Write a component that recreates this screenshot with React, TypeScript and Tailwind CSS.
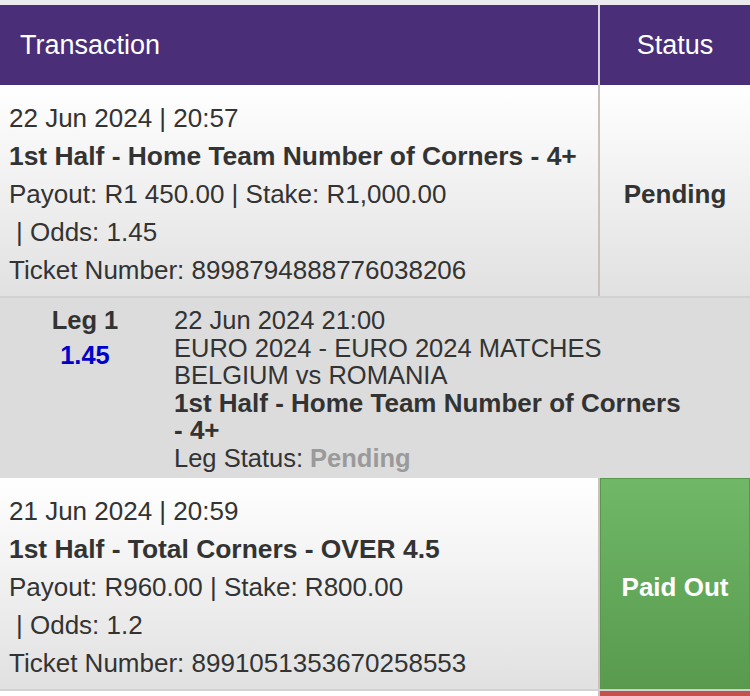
import React from "react";

type Bet = {
  date: string;
  title: string;
  payout: string;
  stake: string;
  odds: string;
  ticket: string;
  status: "pending" | "paid";
};

const bets: Bet[] = [
  {
    date: "22 Jun 2024 | 20:57",
    title: "1st Half - Home Team Number of Corners - 4+",
    payout: "R1 450.00",
    stake: "R1,000.00",
    odds: "1.45",
    ticket: "8998794888776038206",
    status: "pending",
  },
  {
    date: "21 Jun 2024 | 20:59",
    title: "1st Half - Total Corners - OVER 4.5",
    payout: "R960.00",
    stake: "R800.00",
    odds: "1.2",
    ticket: "8991051353670258553",
    status: "paid",
  },
];

function BetRow({ bet }: { bet: Bet }) {
  return (
    <div className="grid grid-cols-[598px_2px_150px] border-b-2 border-[#d2d2d2]">
      <div className="h-[211px] bg-linear-to-b from-white to-[#e1e1e1] pl-[9px] pt-[14px] text-[26px] leading-[38px] text-[#333]">
        <div>{bet.date}</div>
        <div className="text-[26.4px] font-bold">{bet.title}</div>
        <div>
          Payout: {bet.payout} | Stake: {bet.stake}
        </div>
        <div className="pl-[7px]">| Odds: {bet.odds}</div>
        <div>Ticket Number: {bet.ticket}</div>
      </div>
      <div className="bg-[#cbbfbf]" />
      {bet.status === "pending" ? (
        <div className="flex items-center justify-center bg-linear-to-b from-white to-[#e1e1e1] pt-2 text-[26px] font-bold text-[#333]">
          Pending
        </div>
      ) : (
        <div className="flex items-center justify-center border border-[#58984d] bg-linear-to-b from-[#70b868] to-[#599a4e] pt-2 text-[26px] font-bold text-white">
          Paid Out
        </div>
      )}
    </div>
  );
}

function LegRow() {
  return (
    <div className="grid h-[180px] grid-cols-[170px_530px] gap-x-[4px] bg-[#dcdcdc] pt-[9px] text-[25.5px] leading-[27.5px] text-[#333]">
      <div className="text-center">
        <div className="font-bold">Leg 1</div>
        <div className="mt-[7px] font-bold text-[#0000cc]">1.45</div>
      </div>
      <div>
        <div>22 Jun 2024 21:00</div>
        <div>EURO 2024 - EURO 2024 MATCHES</div>
        <div>BELGIUM vs ROMANIA</div>
        <div className="text-[26px] font-bold">
          1st Half - Home Team Number of Corners <span className="whitespace-nowrap">- 4+</span>
        </div>
        <div>
          Leg Status: <span className="font-bold text-[#9a9a9a]">Pending</span>
        </div>
      </div>
    </div>
  );
}

export default function App() {
  return (
    <div className="h-[696px] w-[750px] overflow-hidden bg-white font-['Liberation_Sans',Arial,sans-serif]">
      <div className="h-[5px] bg-[#ebebef]" />
      <div className="grid h-[80px] grid-cols-[598px_2px_150px] bg-[#4a2e77] text-[27px] text-white">
        <div className="flex items-center pl-5">Transaction</div>
        <div className="bg-[#d7d0de]" />
        <div className="flex items-center justify-center">Status</div>
      </div>
      <BetRow bet={bets[0]} />
      <LegRow />
      <BetRow bet={bets[1]} />
      <div className="grid h-[10px] grid-cols-[598px_2px_150px]">
        <div className="bg-white" />
        <div className="bg-[#cbbfbf]" />
        <div className="bg-[#c4514c]" />
      </div>
    </div>
  );
}
